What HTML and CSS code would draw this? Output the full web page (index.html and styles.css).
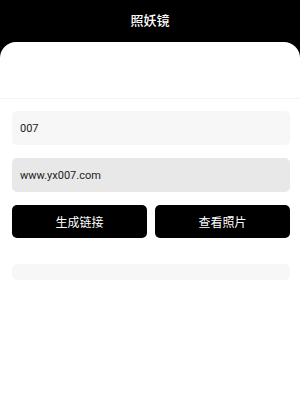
FILE: index.html
```html
<!DOCTYPE html>
<html lang="zh">
<head>
<meta charset="utf-8">
<link rel="stylesheet" href="styles.css">
</head>
<body>
<div class="app">
  <div class="header">照妖镜</div>
  <div class="card">
    <div class="top-section"></div>
    <div class="form">
      <div class="field field-light">007</div>
      <div class="field field-dark">www.yx007.com</div>
      <div class="buttons">
        <div class="btn">生成链接</div>
        <div class="btn">查看照片</div>
      </div>
      <div class="bar"></div>
    </div>
  </div>
</div>
</body>
</html>
```
FILE: styles.css
```css
html, body {
  margin: 0;
  padding: 0;
  background: #fff;
}
body {
  font-family: Roboto, "Noto Sans CJK SC", sans-serif;
}
.app {
  background: #000;
  min-height: 100vh;
  display: flex;
  flex-direction: column;
}
.header {
  height: 42px;
  line-height: 40px;
  text-align: center;
  color: #fff;
  font-size: 13px;
  font-weight: 500;
  font-family: "Noto Sans CJK SC", sans-serif;
}
.card {
  flex: 1;
  background: #fff;
  border-radius: 16px 16px 0 0;
}
.top-section {
  height: 56px;
  border-bottom: 1px solid #f3f3f3;
}
.form {
  padding: 12px 10px 0 12px;
  display: flex;
  flex-direction: column;
}
.field {
  height: 34px;
  border-radius: 5px;
  display: flex;
  align-items: center;
  padding-left: 8px;
  font-size: 11px;
  color: #222;
  margin-bottom: 13px;
}
.field-light {
  background: #f7f7f7;
}
.field-dark {
  background: #e8e8e8;
}
.buttons {
  display: flex;
  gap: 8px;
  margin-bottom: 26px;
}
.btn {
  flex: 1;
  height: 33px;
  border-radius: 5px;
  background: #000;
  color: #fff;
  display: flex;
  align-items: center;
  justify-content: center;
  font-size: 12px;
  font-family: "Noto Sans CJK SC", sans-serif;
}
.bar {
  height: 16px;
  border-radius: 5px;
  background: #f7f7f7;
}
```
